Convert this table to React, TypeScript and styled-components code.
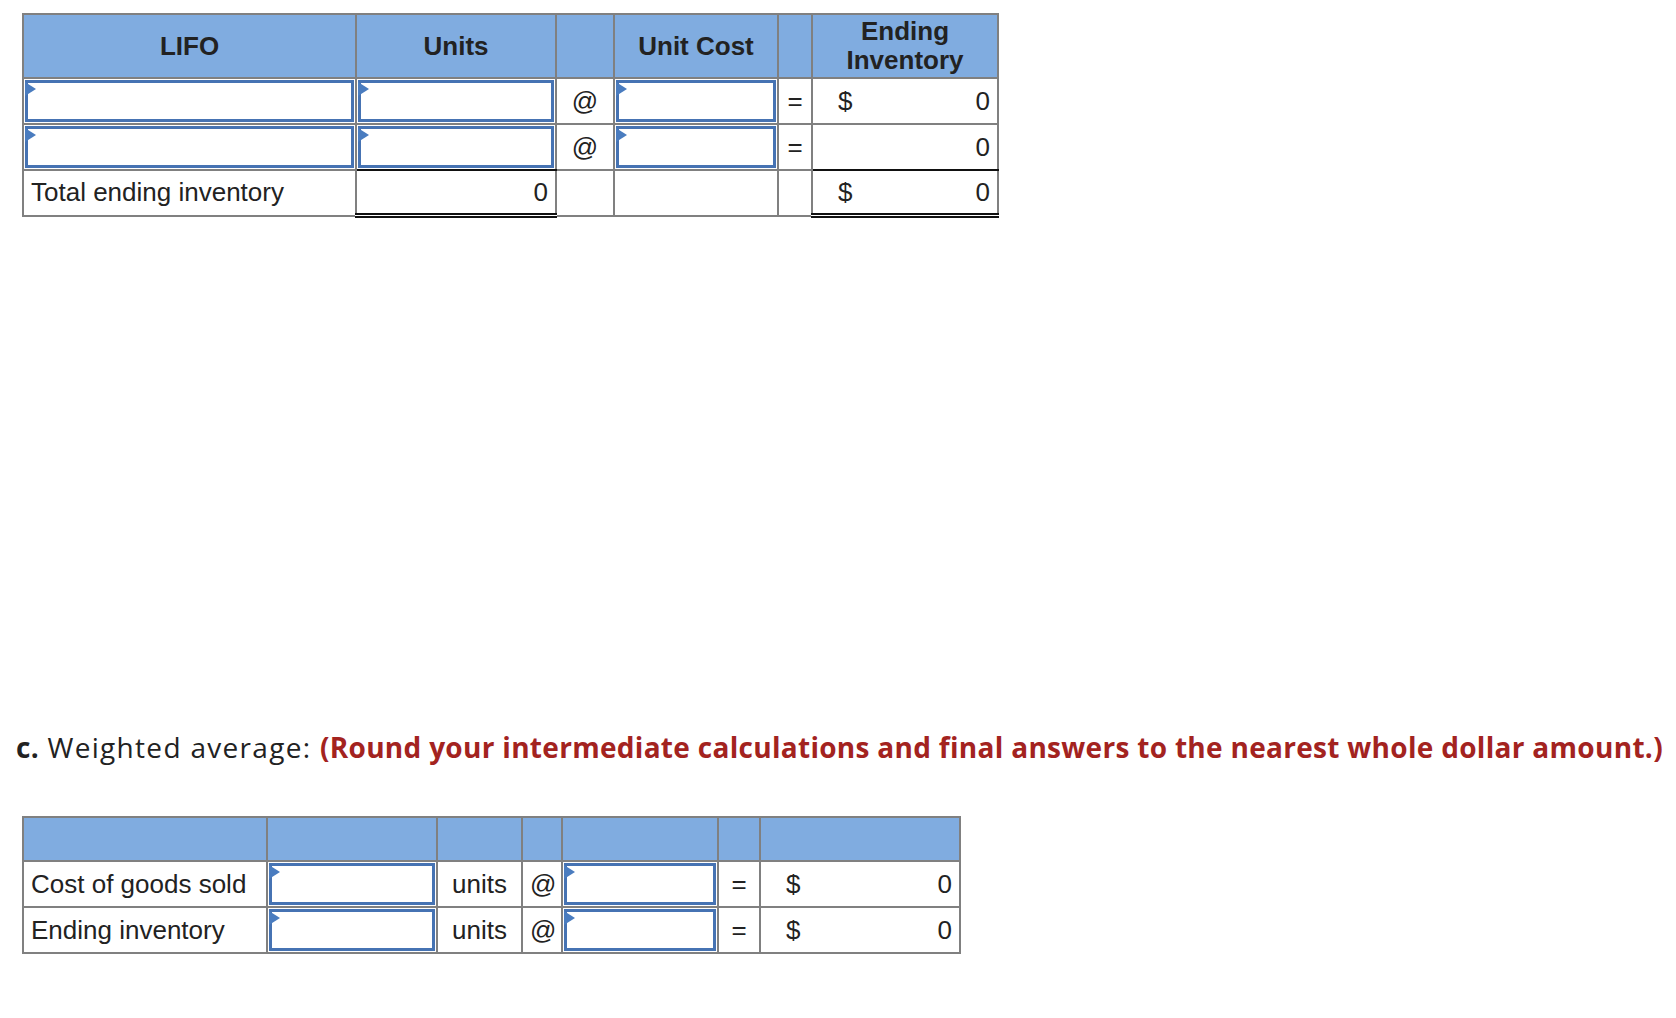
import React from "react";
import styled, { createGlobalStyle } from "styled-components";

const GlobalStyle = createGlobalStyle`
  html, body {
    margin: 0;
    padding: 0;
    background: #fff;
  }
  body {
    font-family: "Liberation Sans", Arial, sans-serif;
    color: #222;
  }
`;

const Page = styled.div`
  padding: 13px 0 40px 16px;
`;

const Table = styled.table<{ $width: number }>`
  width: ${(p) => p.$width}px;
  margin-left: 6px;
  border-collapse: collapse;
  table-layout: fixed;
  font-size: 26px;
`;

const HeadCell = styled.th<{ $height: number }>`
  height: ${(p) => p.$height}px;
  padding: 0 6px;
  background: #80ace0;
  border: 2px solid #808080;
  font-weight: bold;
  line-height: 29px;
  text-align: center;
  color: #222;
`;

const Cell = styled.td<{
  $align?: "left" | "center" | "right";
  $lineBelow?: boolean;
  $double?: boolean;
}>`
  height: 42px;
  padding: 0 7px;
  border: 2px solid #808080;
  text-align: ${(p) => p.$align || "left"};
  vertical-align: middle;
  white-space: nowrap;
  ${(p) => p.$lineBelow && "border-bottom-color: #111;"}
  ${(p) => p.$double && "border-bottom: 5px double #111;"}
`;

const InputCell = styled(Cell)`
  padding: 1px;
`;

const InputWrap = styled.div`
  position: relative;
  height: 42px;
`;

const Field = styled.input`
  box-sizing: border-box;
  display: block;
  width: 100%;
  height: 100%;
  margin: 0;
  border: 3px solid #4673b3;
  background: #fff;
  outline: none;
  font: inherit;
`;

const Marker = styled.span`
  position: absolute;
  top: 2px;
  left: 0;
  width: 0;
  height: 0;
  border-top: 7px solid transparent;
  border-bottom: 7px solid transparent;
  border-left: 11px solid #4a7cbf;
`;

const Money = styled.div`
  display: flex;
  justify-content: space-between;
  padding-left: 18px;
`;

const Heading = styled.p`
  margin: 511px 0 51px;
  font-family: "Open Sans", Lato, sans-serif;
  font-size: 28px;
  letter-spacing: 1.3px;
  line-height: 36px;
  white-space: nowrap;
  color: #222;
`;

const Lead = styled.b`
  font-weight: 700;
  letter-spacing: 0.3px;
`;

const Note = styled.b`
  font-weight: 700;
  letter-spacing: 0.3px;
  color: #a3231f;
`;

const Input = () => (
  <InputWrap>
    <Field type="text" />
    <Marker />
  </InputWrap>
);

const Amount = ({ sign, value }: { sign: boolean; value: string }) => (
  <Money>
    <span>{sign ? "$" : ""}</span>
    <span>{value}</span>
  </Money>
);

export default function App() {
  return (
    <Page>
      <GlobalStyle />
      <Table $width={975}>
        <colgroup>
          <col style={{ width: 333 }} />
          <col style={{ width: 200 }} />
          <col style={{ width: 58 }} />
          <col style={{ width: 164 }} />
          <col style={{ width: 34 }} />
          <col style={{ width: 186 }} />
        </colgroup>
        <thead>
          <tr>
            <HeadCell $height={62}>LIFO</HeadCell>
            <HeadCell $height={62}>Units</HeadCell>
            <HeadCell $height={62}></HeadCell>
            <HeadCell $height={62}>Unit Cost</HeadCell>
            <HeadCell $height={62}></HeadCell>
            <HeadCell $height={62}>
              Ending
              <br />
              Inventory
            </HeadCell>
          </tr>
        </thead>
        <tbody>
          <tr>
            <InputCell>
              <Input />
            </InputCell>
            <InputCell>
              <Input />
            </InputCell>
            <Cell $align="center">@</Cell>
            <InputCell>
              <Input />
            </InputCell>
            <Cell $align="center">=</Cell>
            <Cell>
              <Amount sign value="0" />
            </Cell>
          </tr>
          <tr>
            <InputCell>
              <Input />
            </InputCell>
            <InputCell $lineBelow>
              <Input />
            </InputCell>
            <Cell $align="center">@</Cell>
            <InputCell>
              <Input />
            </InputCell>
            <Cell $align="center">=</Cell>
            <Cell $lineBelow>
              <Amount sign={false} value="0" />
            </Cell>
          </tr>
          <tr>
            <Cell>Total ending inventory</Cell>
            <Cell $align="right" $double>
              0
            </Cell>
            <Cell></Cell>
            <Cell></Cell>
            <Cell></Cell>
            <Cell $double>
              <Amount sign value="0" />
            </Cell>
          </tr>
        </tbody>
      </Table>

      <Heading>
        <Lead>c.</Lead> Weighted average:{" "}
        <Note>
          (Round your intermediate calculations and final answers to the
          nearest whole dollar amount.)
        </Note>
      </Heading>

      <Table $width={937}>
        <colgroup>
          <col style={{ width: 244 }} />
          <col style={{ width: 170 }} />
          <col style={{ width: 85 }} />
          <col style={{ width: 40 }} />
          <col style={{ width: 156 }} />
          <col style={{ width: 42 }} />
          <col style={{ width: 200 }} />
        </colgroup>
        <thead>
          <tr>
            <HeadCell $height={42}></HeadCell>
            <HeadCell $height={42}></HeadCell>
            <HeadCell $height={42}></HeadCell>
            <HeadCell $height={42}></HeadCell>
            <HeadCell $height={42}></HeadCell>
            <HeadCell $height={42}></HeadCell>
            <HeadCell $height={42}></HeadCell>
          </tr>
        </thead>
        <tbody>
          {["Cost of goods sold", "Ending inventory"].map((label) => (
            <tr key={label}>
              <Cell>{label}</Cell>
              <InputCell>
                <Input />
              </InputCell>
              <Cell $align="center">units</Cell>
              <Cell $align="center">@</Cell>
              <InputCell>
                <Input />
              </InputCell>
              <Cell $align="center">=</Cell>
              <Cell>
                <Amount sign value="0" />
              </Cell>
            </tr>
          ))}
        </tbody>
      </Table>
    </Page>
  );
}
